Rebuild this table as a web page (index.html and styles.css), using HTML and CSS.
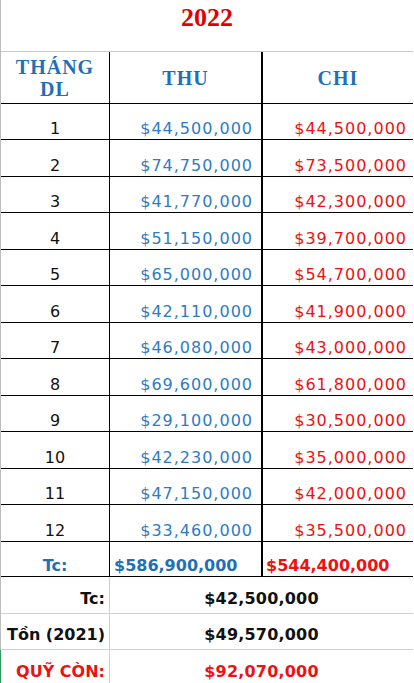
FILE: index.html
```html
<!DOCTYPE html>
<html lang="vi">
<head>
<meta charset="utf-8">
<title>2022</title>
<link rel="stylesheet" href="styles.css">
</head>
<body>
<div class="sheet">
  <div class="title">2022</div>
  <div class="table">
    <div class="row head">
      <div class="c c1">THÁNG<br>DL</div>
      <div class="c c2">THU</div>
      <div class="c c3">CHI</div>
    </div>
    <div class="row"><div class="c c1">1</div><div class="c c2 thu">$44,500,000</div><div class="c c3 chi">$44,500,000</div></div>
    <div class="row"><div class="c c1">2</div><div class="c c2 thu">$74,750,000</div><div class="c c3 chi">$73,500,000</div></div>
    <div class="row"><div class="c c1">3</div><div class="c c2 thu">$41,770,000</div><div class="c c3 chi">$42,300,000</div></div>
    <div class="row"><div class="c c1">4</div><div class="c c2 thu">$51,150,000</div><div class="c c3 chi">$39,700,000</div></div>
    <div class="row"><div class="c c1">5</div><div class="c c2 thu">$65,000,000</div><div class="c c3 chi">$54,700,000</div></div>
    <div class="row"><div class="c c1">6</div><div class="c c2 thu">$42,110,000</div><div class="c c3 chi">$41,900,000</div></div>
    <div class="row"><div class="c c1">7</div><div class="c c2 thu">$46,080,000</div><div class="c c3 chi">$43,000,000</div></div>
    <div class="row"><div class="c c1">8</div><div class="c c2 thu">$69,600,000</div><div class="c c3 chi">$61,800,000</div></div>
    <div class="row"><div class="c c1">9</div><div class="c c2 thu">$29,100,000</div><div class="c c3 chi">$30,500,000</div></div>
    <div class="row"><div class="c c1">10</div><div class="c c2 thu">$42,230,000</div><div class="c c3 chi">$35,000,000</div></div>
    <div class="row"><div class="c c1">11</div><div class="c c2 thu">$47,150,000</div><div class="c c3 chi">$42,000,000</div></div>
    <div class="row"><div class="c c1">12</div><div class="c c2 thu">$33,460,000</div><div class="c c3 chi">$35,500,000</div></div>
    <div class="row total">
      <div class="c c1 tlabel">Tc:</div>
      <div class="c c2 tthu">$586,900,000</div>
      <div class="c c3 tchi">$544,400,000</div>
    </div>
  </div>
  <div class="summary">
    <div class="srow"><div class="label">Tc:</div><div class="val">$42,500,000</div></div>
    <div class="srow"><div class="label">Tồn (2021)</div><div class="val">$49,570,000</div></div>
    <div class="srow last"><div class="label red">QUỸ CÒN:</div><div class="val red">$92,070,000</div></div>
  </div>
</div>
</body>
</html>
```

FILE: styles.css
```css
html, body {
  margin: 0;
  padding: 0;
  background: #ffffff;
}

.sheet {
  width: 412px;
  border-left: 1px solid #bdbdbd;
  font-family: "DejaVu Sans", "Liberation Sans", sans-serif;
  color: #111111;
}

.title {
  height: 48px;
  padding-top: 3px;
  border-bottom: 1px solid #c8c8c8;
  text-align: center;
  font-family: "Liberation Serif", serif;
  font-weight: bold;
  font-size: 26px;
  line-height: 30px;
  color: #e00000;
}

.row {
  display: grid;
  grid-template-columns: 109px 153px 150px;
  height: 36px;
  box-sizing: border-box;
  border-bottom: 1px solid #000000;
}

.row:nth-child(odd) {
  height: 37px;
}

.row.head {
  height: 52px;
}

.row.total {
  height: 35px;
}

.c {
  display: flex;
  align-items: flex-end;
  box-sizing: border-box;
  font-size: 16px;
  line-height: 18px;
  padding-bottom: 1px;
  white-space: nowrap;
}

.c1 {
  border-right: 1px solid #000000;
  justify-content: center;
}

.c2 {
  border-right: 2px solid #000000;
  justify-content: flex-end;
  padding-right: 8px;
}

.c3 {
  justify-content: flex-end;
  padding-right: 6px;
}

.head .c {
  align-items: center;
  justify-content: center;
  text-align: center;
  padding: 0;
  font-family: "Liberation Serif", serif;
  font-weight: bold;
  font-size: 20px;
  line-height: 22px;
  letter-spacing: 1px;
  color: #1f6fb8;
}

.thu {
  color: #2e7bc4;
  letter-spacing: 1px;
}

.chi {
  color: #f01010;
  letter-spacing: 1px;
}

.total .c {
  font-weight: bold;
}

.tlabel {
  color: #1f6fb8;
}

.tthu {
  justify-content: flex-start;
  padding-right: 0;
  padding-left: 4px;
  color: #1f6fb8;
}

.tchi {
  justify-content: flex-start;
  padding-right: 0;
  padding-left: 3px;
  color: #f01010;
}

.srow {
  display: grid;
  grid-template-columns: 109px 303px;
  height: 37px;
  box-sizing: border-box;
  border-bottom: 1px solid #d0d0d0;
  font-weight: bold;
  font-size: 16px;
  line-height: 18px;
}

.srow + .srow {
  height: 36px;
}

.srow.last {
  border-bottom: none;
  box-shadow: -1px 0 0 #2b9a5b;
}

.label {
  display: flex;
  align-items: flex-end;
  justify-content: flex-end;
  box-sizing: border-box;
  padding: 0 4px 5px 0;
  border-right: 1px solid #d0d0d0;
  white-space: nowrap;
}

.val {
  display: flex;
  align-items: flex-end;
  justify-content: center;
  padding-bottom: 5px;
  letter-spacing: 0.2px;
}

.red {
  color: #ee1111;
}
```
